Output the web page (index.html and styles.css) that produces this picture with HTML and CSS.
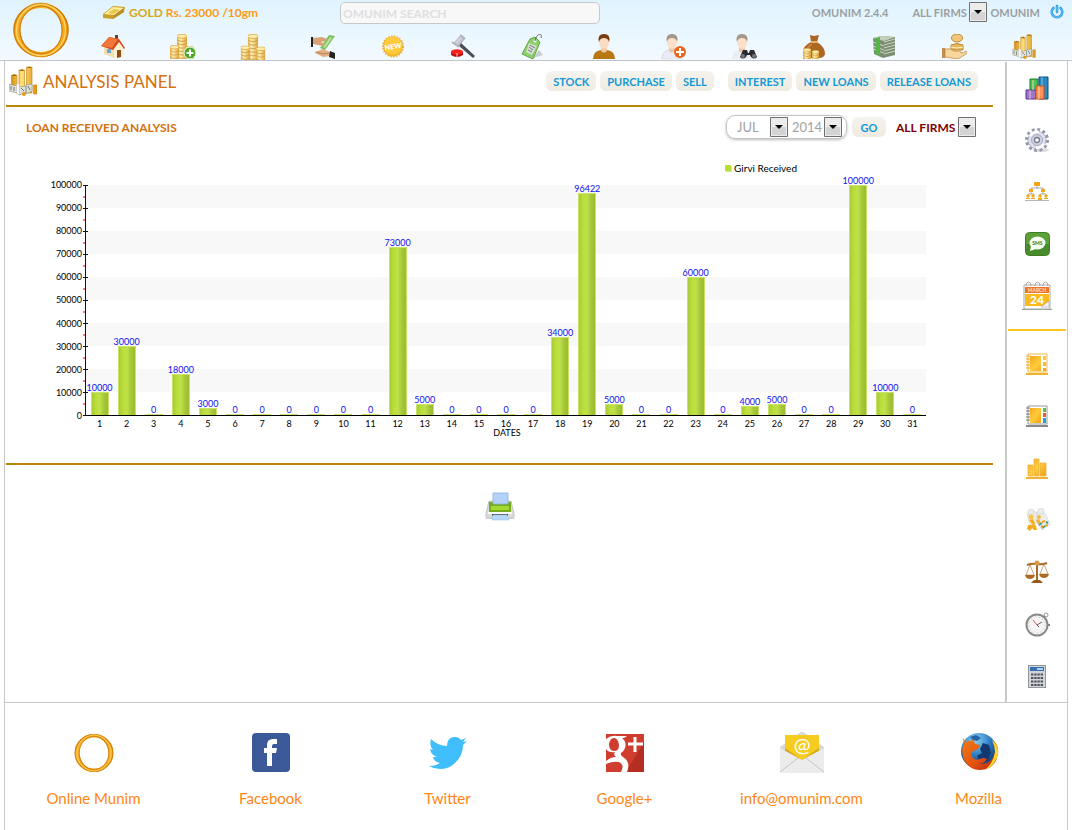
FILE: index.html
```html
<!DOCTYPE html>
<html lang="en">
<head>
<meta charset="utf-8">
<title>Omunim - Analysis Panel</title>
<link rel="stylesheet" href="styles.css">
</head>
<body>
<svg class="defs" width="0" height="0" aria-hidden="true">
  <defs>
    <linearGradient id="gold" x1="0" y1="0" x2="1" y2="1"><stop offset="0" stop-color="#d08008"/><stop offset=".35" stop-color="#ffc62e"/><stop offset=".6" stop-color="#e8920c"/><stop offset="1" stop-color="#ffb325"/></linearGradient>
    <linearGradient id="coin" x1="0" x2="1"><stop offset="0" stop-color="#e6b34a"/><stop offset=".35" stop-color="#fff0b4"/><stop offset="1" stop-color="#dfa23a"/></linearGradient>
    <linearGradient id="pillar" x1="0" x2="1"><stop offset="0" stop-color="#d98f10"/><stop offset=".4" stop-color="#ffe07a"/><stop offset="1" stop-color="#dd930f"/></linearGradient>
    <linearGradient id="silver" x1="0" y1="0" x2="1" y2="1"><stop offset="0" stop-color="#f7f7ff"/><stop offset="1" stop-color="#9a9ab0"/></linearGradient>
    <linearGradient id="yellow" x1="0" y1="0" x2="1" y2="1"><stop offset="0" stop-color="#f5a81a"/><stop offset=".5" stop-color="#ffcb3d"/><stop offset="1" stop-color="#f0a010"/></linearGradient>
    <radialGradient id="globe" cx=".4" cy=".2" r=".8"><stop offset="0" stop-color="#8ed3f3"/><stop offset=".5" stop-color="#2f7fc4"/><stop offset="1" stop-color="#0d2b66"/></radialGradient>
    <linearGradient id="fox" x1="0" y1="0" x2="1" y2="1"><stop offset="0" stop-color="#ef7d16"/><stop offset=".55" stop-color="#e4540f"/><stop offset="1" stop-color="#b81c08"/></linearGradient>
  </defs>
  <symbol id="ring" viewBox="0 0 60 60">
    <ellipse cx="30" cy="30" rx="25" ry="24.500" fill="none" stroke="url(#gold)" stroke-width="5"/>
    <ellipse cx="30" cy="30" rx="22.500" ry="25.500" fill="none" stroke="#e3900e" stroke-width="3.500" transform="rotate(-12 30 30)"/>
    <ellipse cx="30" cy="30" rx="23" ry="25.500" fill="none" stroke="#f7a81f" stroke-width="3.500" transform="rotate(14 30 30)"/>
    <ellipse cx="30" cy="30" rx="27" ry="26" fill="none" stroke="#d17f08" stroke-width="1.500"/>
    <ellipse cx="30" cy="30" rx="24.500" ry="25.500" fill="none" stroke="#ffd569" stroke-width="1.300"/>
    <ellipse cx="30" cy="30" rx="21" ry="24" fill="none" stroke="#c97a0a" stroke-width="1"/>
  </symbol>
  <symbol id="stack" viewBox="0 0 9 24">
    <path d="M0 2v20q4.500 3 9 0V2z" fill="url(#coin)"/><ellipse cx="4.500" cy="2" rx="4.500" ry="1.700" fill="#ffeeb0" stroke="#d39a32" stroke-width=".6"/>
    <path d="M0 5q4.500 3 9 0M0 8q4.500 3 9 0M0 11q4.500 3 9 0M0 14q4.500 3 9 0M0 17q4.500 3 9 0M0 20q4.500 3 9 0" fill="none" stroke="#c9953a" stroke-width=".7"/>
  </symbol>
  <symbol id="coins" viewBox="0 0 24 25">
    <svg x="7" y="0" width="10" height="25" viewBox="0 0 9 22" preserveAspectRatio="none"><use href="#stack" width="9" height="24"/></svg>
    <svg x="0" y="11" width="9" height="14" viewBox="0 0 9 13" preserveAspectRatio="none"><use href="#stack" width="9" height="24"/></svg>
    <svg x="15" y="12" width="9" height="13" viewBox="0 0 9 12" preserveAspectRatio="none"><use href="#stack" width="9" height="24"/></svg>
  </symbol>
  <symbol id="growth" viewBox="0 0 28 30">
    <path d="M2.500 9h5.500v13H2.500zM10 4h5.500v20H10zM17.500 1h5.500v26h-5.500zM24.500 19h3.500v9h-3.500z" fill="url(#pillar)" stroke="#c27f10" stroke-width=".6"/>
    <path d="M2.500 10l3-2 2.500 2zM10 5l3-2 2.500 2zM17.500 2l3-1.500L23 2z" fill="#a86c08"/>
    <path d="M0 18l8 2v7l-8-2zM10 21l7-1v7l-7 2zM17 19l6-1v7l-6 3z" fill="#dfe2da" stroke="#8b9084" stroke-width=".6"/>
    <path d="M2 20v4M5 21v4M12 22l3 3M19 20l2 4" stroke="#6f766a" fill="none"/><path d="M7.500 18h3v10h-3z" fill="#fafafa" stroke="#bbb" stroke-width=".5"/><circle cx="15" cy="28" r="2" fill="#e39b10"/>
  </symbol>
</svg>

<header class="top">
  <a class="logo" href="#" aria-label="Omunim home"><svg width="62" height="60"><use href="#ring"/></svg></a>
  <div class="top-body">
    <div class="top-bar">
      <p class="rate"><svg width="24" height="16" viewBox="0 0 24 16"><path d="M1 10L11 2l12 1-1 5-11 7-10-1z" fill="#c9a227"/><path d="M2 10l9-7 11 1-10 7z" fill="#ffeda0"/><path d="M6 9l6-4 6 1-7 4z" fill="#e7c64c"/><path d="M12 11l10-7v4l-11 7z" fill="#b9902a"/></svg><span class="metal">GOLD</span> Rs. 23000 /10gm</p>
      <input class="search" type="text" placeholder="OMUNIM SEARCH" aria-label="Omunim search">
      <div class="account">
        <span class="version">OMUNIM 2.4.4</span>
        <select class="pick" aria-label="Firm"><option>ALL FIRMS</option></select>
        <span class="user">OMUNIM</span>
        <button class="power" type="button" aria-label="Log out"><svg width="16" height="16" viewBox="0 0 16 16"><path d="M4.500 4a5.300 5.300 0 1 0 7 0M8 2v6" fill="none" stroke="#2b9de6" stroke-width="2.600" stroke-linecap="round"/><path d="M4.500 4a5.300 5.300 0 1 0 7 0M8 2v6" fill="none" stroke="#7fccf7" stroke-width=".8"/></svg></button>
      </div>
    </div>
    <nav class="tools" aria-label="Main">
      <a href="#" aria-label="Home"><svg width="24" height="25" viewBox="0 0 24 25"><path d="M14 1h3v6h-3z" fill="#7a3a1a"/><path d="M3 12l8-5 11 6v8l-9 3-10-4z" fill="#f3dfb4"/><path d="M13 14l5-7 5 7v8l-10 3z" fill="#fff2d0"/><path d="M0 12L8 3l10 2 6 9-1 1-5-7-6 8z" fill="#d9451b"/><path d="M1 12L8 3l9 2-6 9z" fill="#f17738"/><path d="M16 16h4v7l-4 1z" fill="#8a4d20"/><path d="M6 15h4v4H6z" fill="#6ea7d2"/></svg></a>
      <a href="#" aria-label="Add stock"><svg width="27" height="26" viewBox="0 0 27 26"><use href="#coins" width="24" height="25"/><circle cx="20" cy="19" r="6" fill="#4da727" stroke="#e9ffe0"/><path d="M20 15.500v7M16.500 19h7" stroke="#fff" stroke-width="2"/></svg></a>
      <a href="#" aria-label="Stock"><svg width="26" height="26" viewBox="0 0 24 25"><use href="#coins" width="24" height="25"/></svg></a>
      <a href="#" aria-label="Payments"><svg width="26" height="25" viewBox="0 0 26 25"><path d="M10 14L19 1l6 1-10 14z" fill="#7cc05c"/><path d="M13 13l7-10 2 1-7 10z" fill="#b9e29c"/><path d="M1 3h2v10H1z" fill="#222"/><path d="M3 4l9-1 5 2-2 2-4 1 4 2-2 2-5-1-5-1z" fill="#d8a274"/><path d="M5 18l8-3 7 3 1 4-8 1-8-4z" fill="#e3b088"/><path d="M6 18l7 2 6-1" stroke="#a8744e" fill="none" stroke-width=".8"/><path d="M20 17l5 2v6l-6-2z" fill="#222"/></svg></a>
      <a href="#" aria-label="New"><svg width="24" height="25" viewBox="0 0 24 25"><circle cx="12" cy="12.500" r="10" fill="#f9bc26" stroke="#eab03a" stroke-width="2" stroke-dasharray="1.600 1.200"/><circle cx="12" cy="11.500" r="9" fill="#ffca3c"/><text class="badge-text" x="12" y="15" text-anchor="middle" transform="rotate(-8 12 12)">NEW</text></svg></a>
      <a href="#" aria-label="Auction"><svg width="26" height="25" viewBox="0 0 26 25"><path d="M11 9l14 13-2 2L9 12z" fill="#4a4d52"/><path d="M4 9L11 1l4 3-7 9z" fill="url(#silver)" stroke="#999" stroke-width=".7"/><path d="M2 8l7 5M10 1l5 4" stroke="#b5b5b5" stroke-width="2"/><path d="M1 18v3q6 4 12 0v-3z" fill="#c00b0b"/><ellipse cx="7" cy="18" rx="6" ry="2.700" fill="#f62222"/><path d="M7 19v4" stroke="#ffc0c0"/></svg></a>
      <a href="#" aria-label="Price tags"><svg width="24" height="26" viewBox="0 0 24 26"><path d="M12 24l10-3-4-5z" fill="#c6cdd0"/><path d="M9 5l5-2 5 5-7 17L1 20z" fill="#8bcf6a" stroke="#5fa647"/><path d="M8 9l8 3-5 9-6-3z" fill="#d5dfd0"/><path d="M9 11l5 3M8 13l4 3M7 16l4 2" stroke="#777"/><circle cx="14" cy="7" r="1.500" fill="#fff"/><path d="M14 7c2-9 8-8 6-3" fill="none" stroke="#666"/></svg></a>
      <a href="#" aria-label="Customer"><svg width="24" height="25" viewBox="0 0 24 25"><path d="M1 25q0-8 8-9h6q8 1 8 9z" fill="#b97714"/><path d="M9 13h6v4q-3 3-6 0z" fill="#f0c6a4"/><ellipse cx="12" cy="8" rx="5" ry="7" fill="#fbdcc2"/><path d="M7 8Q5 0 12 0t5 8q-1-4-5-4T7 8z" fill="#7c3c12"/></svg></a>
      <a href="#" aria-label="Add customer"><svg width="26" height="25" viewBox="0 0 26 25"><path d="M1 25q0-8 7-9h6q7 1 7 9z" fill="#ebecf5" stroke="#cfd0dc" stroke-width=".7"/><path d="M8 13h6v4q-3 3-6 0z" fill="#eac5a8"/><ellipse cx="11" cy="8" rx="5" ry="7" fill="#fbe0ca"/><path d="M6 8Q4 0 11 0t5 8q-1-4-5-4T6 8z" fill="#a59789"/><circle cx="19" cy="18" r="6" fill="#e9661d"/><path d="M19 14v8M15 18h8" stroke="#fff" stroke-width="2"/></svg></a>
      <a href="#" aria-label="Find customer"><svg width="26" height="25" viewBox="0 0 26 25"><path d="M1 25q0-8 7-9h6q7 1 7 9z" fill="#ebecf5"/><path d="M8 13h6v4q-3 3-6 0z" fill="#eac5a8"/><ellipse cx="11" cy="8" rx="5" ry="7" fill="#fbe0ca"/><path d="M6 8Q4 0 11 0t5 8q-1-4-5-4T6 8z" fill="#a59789"/><path d="M12 16h4l1 3h1l1-3h4l3 7q-3 3-6 0l-1-2h-3l-1 2q-3 3-6 0z" fill="#2b2b2f"/><circle cx="12" cy="22" r="2" fill="#777"/><circle cx="23" cy="22" r="2" fill="#777"/></svg></a>
      <a href="#" aria-label="Money bag"><svg width="24" height="25" viewBox="0 0 24 25"><path d="M8 1l4 1 5-1-2 7q8 5 8 12-1 4-6 4H7q-6-1-6-6 0-6 8-10z" fill="#ad6624"/><path d="M9 7h7v2H9z" fill="#e6b26a"/><path d="M10 10q-5 3-6 9" stroke="#cd8540" fill="none" stroke-width="2"/><svg x="1" y="14" width="8" height="11" viewBox="0 0 9 12" preserveAspectRatio="none"><use href="#stack" width="9" height="24"/></svg><svg x="10" y="16" width="7" height="9" viewBox="0 0 9 10" preserveAspectRatio="none"><use href="#stack" width="9" height="24"/></svg></svg></a>
      <a href="#" aria-label="Cash"><svg width="24" height="25" viewBox="0 0 24 25"><path d="M1 4l9-2 13 1v18l-12 3-9-4z" fill="#7c8e72"/><path d="M1 4l9-2 13 1-11 4z" fill="#c3cfb8"/><path d="M12 8l11-3M12 11l11-3M12 14l11-3M12 17l11-3M12 20l11-3M1 8l11 4M1 12l11 4M1 15l11 4" stroke="#ccd5c2" fill="none"/><path d="M4 4l4-1v19l-4-2z" fill="#55b648"/></svg></a>
      <a href="#" aria-label="Deposits"><svg width="26" height="25" viewBox="0 0 26 25"><ellipse cx="16" cy="4" rx="5.500" ry="4" fill="#f0c878" stroke="#bd8b34"/><path d="M10 11q6-3 12 0v5H10z" fill="#e4b65c" stroke="#bd8b34"/><path d="M10 13q6 2 12 0" stroke="#fff0b0" fill="none"/><path d="M1 14h3v10H1z" fill="#c09058"/><path d="M4 15q6-1 9 2h5q3 1 2 2 3 0 5-2 2 1 0 3l-8 5-13-2z" fill="#f8d79c" stroke="#ba8538" stroke-width=".7"/></svg></a>
      <a href="#" aria-label="Analysis"><svg width="24" height="25" viewBox="0 0 28 30"><use href="#growth" width="28" height="30"/></svg></a>
    </nav>
  </div>
</header>

<div class="frame">
  <div class="content">
    <main class="main">
      <div class="title-row">
        <h1 class="title"><svg width="28" height="30"><use href="#growth"/></svg>ANALYSIS PANEL</h1>
        <div class="tabs">
          <div class="tab-group"><button class="btn" type="button">STOCK</button><button class="btn" type="button">PURCHASE</button><button class="btn" type="button">SELL</button></div>
          <div class="tab-group"><button class="btn" type="button">INTEREST</button><button class="btn" type="button">NEW LOANS</button><button class="btn" type="button">RELEASE LOANS</button></div>
        </div>
      </div>
      <section class="report">
        <div class="report-head">
          <h2 class="subtitle">LOAN RECEIVED ANALYSIS</h2>
          <form class="filters">
            <div class="period">
              <select class="pick month" aria-label="Month"><option>JUL</option></select>
              <select class="pick year" aria-label="Year"><option>2014</option></select>
            </div>
            <button class="btn" type="button">GO</button>
            <select class="pick firm" aria-label="Firm filter"><option>ALL FIRMS</option></select>
          </form>
        </div>
        <figure class="chart">
          <figcaption class="legend"><i class="swatch"></i>Girvi Received</figcaption>
          <div class="plot-row">
            <div class="scale"><span>100000</span><span>90000</span><span>80000</span><span>70000</span><span>60000</span><span>50000</span><span>40000</span><span>30000</span><span>20000</span><span>10000</span><span>0</span></div>
            <div class="axis"></div>
            <ol class="plot">
              <li><div class="col"><b>10000</b><i style="height:10%"></i></div><span>1</span></li>
              <li><div class="col"><b>30000</b><i style="height:30%"></i></div><span>2</span></li>
              <li><div class="col"><b>0</b><i style="height:0%"></i></div><span>3</span></li>
              <li><div class="col"><b>18000</b><i style="height:18%"></i></div><span>4</span></li>
              <li><div class="col"><b>3000</b><i style="height:3%"></i></div><span>5</span></li>
              <li><div class="col"><b>0</b><i style="height:0%"></i></div><span>6</span></li>
              <li><div class="col"><b>0</b><i style="height:0%"></i></div><span>7</span></li>
              <li><div class="col"><b>0</b><i style="height:0%"></i></div><span>8</span></li>
              <li><div class="col"><b>0</b><i style="height:0%"></i></div><span>9</span></li>
              <li><div class="col"><b>0</b><i style="height:0%"></i></div><span>10</span></li>
              <li><div class="col"><b>0</b><i style="height:0%"></i></div><span>11</span></li>
              <li><div class="col"><b>73000</b><i style="height:73%"></i></div><span>12</span></li>
              <li><div class="col"><b>5000</b><i style="height:5%"></i></div><span>13</span></li>
              <li><div class="col"><b>0</b><i style="height:0%"></i></div><span>14</span></li>
              <li><div class="col"><b>0</b><i style="height:0%"></i></div><span>15</span></li>
              <li><div class="col"><b>0</b><i style="height:0%"></i></div><span>16</span></li>
              <li><div class="col"><b>0</b><i style="height:0%"></i></div><span>17</span></li>
              <li><div class="col"><b>34000</b><i style="height:34%"></i></div><span>18</span></li>
              <li><div class="col"><b>96422</b><i style="height:96.422%"></i></div><span>19</span></li>
              <li><div class="col"><b>5000</b><i style="height:5%"></i></div><span>20</span></li>
              <li><div class="col"><b>0</b><i style="height:0%"></i></div><span>21</span></li>
              <li><div class="col"><b>0</b><i style="height:0%"></i></div><span>22</span></li>
              <li><div class="col"><b>60000</b><i style="height:60%"></i></div><span>23</span></li>
              <li><div class="col"><b>0</b><i style="height:0%"></i></div><span>24</span></li>
              <li><div class="col"><b>4000</b><i style="height:4%"></i></div><span>25</span></li>
              <li><div class="col"><b>5000</b><i style="height:5%"></i></div><span>26</span></li>
              <li><div class="col"><b>0</b><i style="height:0%"></i></div><span>27</span></li>
              <li><div class="col"><b>0</b><i style="height:0%"></i></div><span>28</span></li>
              <li><div class="col"><b>100000</b><i style="height:100%"></i></div><span>29</span></li>
              <li><div class="col"><b>10000</b><i style="height:10%"></i></div><span>30</span></li>
              <li><div class="col"><b>0</b><i style="height:0%"></i></div><span>31</span></li>
            </ol>
          </div>
          <p class="axis-name">DATES</p>
        </figure>
      </section>
      <button class="print" type="button" aria-label="Print"><svg width="30" height="29" viewBox="0 0 30 29"><path d="M0 26h30v1H0z" fill="#e2e2e2"/><path d="M4 9h22l3 13v3q0 1-2 1H3q-2 0-2-1v-3z" fill="#dcdedd" stroke="#b3b6b4" stroke-width=".8"/><path d="M4 10h22v10H4z" fill="#76ad1d"/><path d="M6 14h18v4H6z" fill="#a5d932"/><path d="M3 20h24v2H3z" fill="#fafafa"/><path d="M7 22h16v2H7z" fill="#47504e"/><path d="M8 1h15v11H8z" fill="#b4d2f7" stroke="#86b3e6" stroke-width=".8"/><path d="M8 23h14l2 5H7z" fill="#b8d8fa" stroke="#a5c8ea" stroke-width=".6"/></svg></button>
    </main>

    <nav class="side" aria-label="Shortcuts">
      <a href="#" aria-label="Reports"><svg width="24" height="24" viewBox="0 0 24 24"><path d="M5 3h8v12H5z" fill="#49c452" stroke="#16792a"/><path d="M14 1h9v22h-9z" fill="#2c89c0" stroke="#0c4d80"/><path d="M17 1v22" stroke="#7fc3e8"/><path d="M1 14h10v9H1z" fill="#9e77c7" stroke="#58318a"/><path d="M5 14v9" stroke="#dbc7f2"/><path d="M11 10h8v13h-8z" fill="#ff925a" stroke="#d34c10"/><path d="M14 10v13M8 4v10" stroke="#ffd0b0"/></svg></a>
      <a href="#" aria-label="Settings"><svg width="25" height="25" viewBox="0 0 25 25"><ellipse cx="16" cy="22" rx="8" ry="2" fill="#ddd"/><circle cx="12" cy="12" r="10" fill="none" stroke="#9496ac" stroke-width="4" stroke-dasharray="2.700 2.530"/><circle cx="12" cy="12" r="9" fill="#dfe0ee" stroke="#a4a6ba" stroke-width=".8"/><path d="M5 8q3-5 9-4M19 16q-3 4-8 4" stroke="#fff" stroke-width="2.500" fill="none"/><circle cx="12" cy="12" r="5.500" fill="#cfd1df" stroke="#a9abbf"/><circle cx="12" cy="12" r="2.500" fill="#fff" stroke="#777a90" stroke-width="1.300"/></svg></a>
      <a href="#" aria-label="Hierarchy"><svg width="24" height="20" viewBox="0 0 24 20"><path d="M0 18h24v1H0z" fill="#b5b5b5"/><path d="M12 4v3M6 8V6h12v2M6 10v2M3 13v-1h6v1M18 10v2M15 13v-1h6v1" fill="none" stroke="#aaa"/><g fill="#f5a716"><path d="M9 0h6v4H9zM4 7h4v3H4zM16 7h4v3h-4z"/><circle cx="3" cy="14" r="1.700"/><circle cx="8" cy="14" r="1.700"/><circle cx="15" cy="14" r="1.700"/><circle cx="21" cy="14" r="1.700"/><path d="M1 16h4v1H1zM6 16h4v1H6zM13 16h4v2h-4zM19 16h4v1h-4z"/></g></svg></a>
      <a href="#" aria-label="Messages"><svg width="25" height="24" viewBox="0 0 25 24"><rect x=".5" y=".5" width="24" height="23" rx="4" fill="#5da03a" stroke="#3e7d22"/><path d="M1 12h23v8q0 3-3 3H4q-3 0-3-3z" fill="#488b2b"/><ellipse cx="12.500" cy="11" rx="8" ry="6.500" fill="#f6fff0"/><path d="M6 14l-1 5 6-2z" fill="#f6fff0"/><text class="sms-text" x="12.500" y="13" text-anchor="middle">SMS</text></svg></a>
      <a href="#" aria-label="Calendar"><svg width="30" height="30" viewBox="0 0 30 30"><path d="M0 28h30v1H0z" fill="#999"/><path d="M2 4h26v24H2z" fill="#fff" stroke="#aaa"/><path d="M3 6h24v6H3z" fill="#ef7427"/><path d="M3 13h24v12H3z" fill="#fbba1c"/><path d="M19 26l8-6v6z" fill="#f4f4f4" stroke="#aaa" stroke-width=".6"/><path d="M4 5q0-4 2.500-4T9 5M13 5q0-4 2.500-4T18 5M21 5q0-4 2.500-4T26 5" fill="none" stroke="#aaa"/><text class="month-text" x="15" y="11" text-anchor="middle">MARCH</text><text class="day-text" x="15" y="23" text-anchor="middle">24</text></svg></a>
      <hr class="divider">
      <a href="#" aria-label="Ledger"><svg width="24" height="24" viewBox="0 0 24 24"><path d="M1 21h22v2H1z" fill="#f3b22d"/><path d="M3 2h19v18H3z" fill="#fff" stroke="#f3b84a"/><path d="M5 4h11v15H5zM18 4h3v4h-3zM18 10h3v4h-3zM18 16h3v3h-3z" fill="url(#yellow)"/><path d="M1 4h4M1 7h4M1 10h4M1 13h4M1 16h4" stroke="#efa81c"/></svg></a>
      <a href="#" aria-label="Notebook"><svg width="24" height="24" viewBox="0 0 24 24"><path d="M1 21h22v2H1z" fill="#888"/><path d="M3 2h19v18H3z" fill="#fff" stroke="#999"/><path d="M5 4h11v15H5z" fill="url(#yellow)"/><path d="M18 4h3v4h-3z" fill="#68b94b"/><path d="M18 9h3v4h-3z" fill="#f05a28"/><path d="M18 14h3v5h-3z" fill="#26a0da"/><path d="M1 4h4M1 7h4M1 10h4M1 13h4M1 16h4" stroke="#777"/></svg></a>
      <a href="#" aria-label="Charts"><svg width="24" height="24" viewBox="0 0 24 24"><path d="M1 21h22v2H1z" fill="#f3b22d"/><path d="M3 9h5v11H3zM9 3h5v17H9zM15 7h6v13h-6z" fill="url(#yellow)" stroke="#eeb344" stroke-width=".8"/></svg></a>
      <a href="#" aria-label="Partners"><svg width="25" height="24" viewBox="0 0 25 24"><g fill="#ebedec" stroke="#d3d7d5" stroke-width=".7"><path d="M2 6l5-4 5 3 2 9-9 3zM12 4l5-2 4 5 4 9-8 6-6-9z"/><circle cx="6" cy="4" r="3"/><circle cx="16" cy="3" r="3"/></g><circle cx="6" cy="9" r="2.500" fill="#fac548"/><path d="M4 12l4-1 2 4-3 1zM3 17h4l2-2 2 3 1 4h-3l-2-2-2 3-3-2z" fill="#f6ad1b"/><circle cx="14" cy="9" r="2" fill="#f6b93a"/><path d="M11 12l3-1 2 4-3 1z" fill="#f2b233"/><path d="M14 17l3-2M17 20l3-2M21 14l2 1" stroke="#3da388" stroke-width="2"/><path d="M17 14l3-1M20 18l3-1M16 18l2 1" stroke="#eda421" stroke-width="2"/></svg></a>
      <a href="#" aria-label="Balance"><svg width="24" height="24" viewBox="0 0 24 24"><path d="M12 2v18M2 5q5-2 10-1t10-1" stroke="#a66b24" stroke-width="2" fill="none"/><path d="M5 5L1 15h8L5 5M19 4l-4 10h8L19 4" fill="none" stroke="#b9935e" stroke-width=".8"/><path d="M0 15h10q-1 4-5 4t-5-4zM14 14h10q-1 4-5 4t-5-4z" fill="#ae6b22"/><path d="M9 20h6l3 3H6z" fill="#9b5a15"/><circle cx="12" cy="3" r="2.500" fill="#d89a42"/></svg></a>
      <a href="#" aria-label="Stopwatch"><svg width="25" height="25" viewBox="0 0 25 25"><circle cx="21" cy="3" r="2" fill="none" stroke="#999"/><path d="M17 7l3-3M22 13h3" stroke="#888" stroke-width="2"/><circle cx="12" cy="13" r="10.500" fill="#f4f4f4" stroke="#8a8a8a" stroke-width="2"/><circle cx="12" cy="13" r="8" fill="none" stroke="#bbb" stroke-dasharray="1 2.900"/><path d="M12 13l5-3M12 13l2 2" stroke="#666"/><path d="M12 13L8 8" stroke="#e55"/></svg></a>
      <a href="#" aria-label="Calculator"><svg width="18" height="23" viewBox="0 0 18 23"><rect x=".5" y=".5" width="17" height="22" fill="#d2d4d8" stroke="#94979c"/><path d="M2 2h14v4H2z" fill="#396fae"/><path d="M9 3h6v2H9z" fill="#a8d0f1"/><path d="M3 9.500h12M3 13h12M3 16.500h12M3 20h12" stroke="#50545c" stroke-width="2" stroke-dasharray="2.400 .8"/></svg></a>
    </nav>
  </div>

  <footer class="links">
    <a href="#"><svg width="44" height="42" viewBox="0 0 60 60"><use href="#ring"/></svg>Online Munim</a>
    <a href="#"><svg width="42" height="42" viewBox="0 0 42 42"><rect x="2" y="1" width="38" height="39" rx="4" fill="#3b5998"/><path d="M17 34V21h-3v-5h3v-3q0-6 6-6h4v5h-3q-2 0-2 2v2h5l-1 5h-4v13z" fill="#fff"/></svg>Facebook</a>
    <a href="#"><svg width="42" height="42" viewBox="0 0 42 42"><path d="M4 7q7 7 16 7Q20 5 28 5q4 0 6 3l5-2-3 4 4-1-4 4q0 11-8 18-6 6-15 6-6 0-11-3 7 0 11-3-6-1-7-6h4q-6-2-7-8l3 1Q2 14 4 7z" fill="#40bdfb"/></svg>Twitter</a>
    <a href="#"><svg width="42" height="42" viewBox="0 0 42 42"><path d="M2 2h38v38H2z" fill="#cf3d2e"/><path d="M40 10v30H22z" fill="#b42e22"/><path d="M2 7q5-4 11-3h10l-3 2h-2q5 4 3 10-1 3-4 5-1 2 2 4 8 5 4 15h-6q4-7-2-10-6-1-13 2v-3q5-4 10-4-3-2-1-5-6 1-9-3zM5 12q0 7 5 7t5-6q-1-7-5-7t-5 6z" fill="#fff" fill-rule="evenodd"/><path d="M31 5v15M24 12h15" stroke="#fff" stroke-width="3"/></svg>Google+</a>
    <a href="#"><svg width="46" height="42" viewBox="0 0 46 42"><path d="M1 15L23-1l22 16v26H1z" fill="#d8d8d8"/><path d="M6 3h34v20L23 31 6 23z" fill="#f6cc21"/><path d="M6 16l17 12 17-12v7l-17 8-17-8z" fill="#d4a915"/><path d="M1 16l22 12 22-12v25H1z" fill="#ececec"/><path d="M1 40l18-14M45 40L27 26" stroke="#c3c3c3"/><text class="at-text" x="23" y="20" text-anchor="middle">@</text></svg>info@omunim.com</a>
    <a href="#"><svg width="42" height="42" viewBox="0 0 42 42"><circle cx="21" cy="19" r="18" fill="url(#globe)"/><path d="M25 11l6 2 2 8-4 8-8-1-2-4 5-3-2-4z" fill="#12386f"/><path d="M12 5l6-2 5 3-4 3-4-1z" fill="#2264a8"/><path d="M5 6q0 4 2 5 4-4 7-1l-1-4q3 2 4 6l5 1-2 4-5 2q-3 3-1 6 3 4 8 2 4-2 7 0-3 5-9 5 14 1 17-12 1-5-1-11 5 5 4 13-2 12-12 15-15 4-22-9-4-11 1-19z" fill="url(#fox)"/><path d="M34 8q7 6 6 14-2 11-13 16 9-8 10-18 0-6-3-12z" fill="#ffd42b"/></svg>Mozilla</a>
  </footer>
</div>
</body>
</html>
```
FILE: styles.css
```css
* {
  box-sizing: border-box;
}

body {
  margin: 0;
  min-height: 100vh;
  display: flex;
  flex-direction: column;
  background: #fff;
  font-family: Lato, "Open Sans", sans-serif;
}

h1, h2, p, figure, ol {
  margin: 0;
  padding: 0;
}

a {
  text-decoration: none;
}

button, input, select {
  font-family: inherit;
}

svg {
  display: block;
  flex: none;
}

.defs {
  position: absolute;
}

/* Header */
.top {
  display: flex;
  height: 61px;
  border-bottom: 1px solid #c2c4cc;
  background: linear-gradient(#dff3fe, #f3faff);
}

.logo {
  width: 78px;
  padding-left: 10px;
}

.top-body {
  flex: 1;
  padding-right: 13px;
}

.top-bar {
  display: flex;
  height: 34px;
  padding: 2px 0 0 24px;
  margin-right: -6px;
}

.rate {
  display: flex;
  gap: 3px;
  width: 238px;
  height: 20px;
  align-items: center;
  color: #ff9a14;
  font-size: 12px;
  font-weight: 700;
}

.metal {
  color: #d9a520;
}

.search {
  width: 260px;
  height: 22px;
  padding: 0 2px;
  border: 1px solid #c6c9cc;
  border-radius: 5px;
  background: #f8f8f8;
  font-size: 12px;
  font-weight: 700;
}

.search::placeholder {
  color: #dedfe2;
}

.account {
  display: flex;
  height: 20px;
  align-items: center;
  margin-left: auto;
  color: #9c9fa2;
  font-size: 11px;
  font-weight: 700;
}

.version {
  margin-right: 22px;
}

.user {
  margin: 0 9px 0 3px;
}

.power {
  padding: 0;
  border: 0;
  background: none;
}

.tools {
  display: grid;
  grid-template-columns: repeat(14, 1fr);
  justify-items: center;
}

.badge-text {
  fill: #fff;
  font-size: 7px;
  font-weight: 900;
}

/* Controls */
.pick {
  appearance: none;
  height: 20px;
  padding: 0 20px 0 2px;
  border: 0;
  background: url("data:image/svg+xml,%3Csvg xmlns='http://www.w3.org/2000/svg' width='18' height='20'%3E%3Cpath d='M.5.5h17v19H.5z' fill='%23ececec' stroke='%23707070'/%3E%3Cpath d='M2 10h14v8H2z' fill='%23d4d4d4'/%3E%3Cpath d='M5 8h8l-4 4z' fill='%23000'/%3E%3C/svg%3E") no-repeat right center;
  color: inherit;
  font-size: 11px;
  font-weight: 700;
}

.btn {
  min-width: 34px;
  height: 20px;
  padding: 0 7px;
  border: 0;
  border-radius: 6px;
  background: linear-gradient(#f5f3ee, #efebe1);
  color: #1499d6;
  font-size: 11px;
  font-weight: 700;
}

/* Page frame */
.frame {
  flex: 1;
  display: flex;
  flex-direction: column;
  margin: 0 4px;
  border: solid #c8c8c8;
  border-width: 0 1px;
}

.content {
  display: flex;
  padding-top: 1px;
  border-bottom: 1px solid #c8c8c8;
}

.main {
  flex: 1;
  padding: 0 12px 0 1px;
}

.title-row {
  display: flex;
  align-items: center;
  justify-content: space-between;
  height: 45px;
  padding: 0 15px 5px 3px;
  border-bottom: 2px solid #b8860b;
}

.title {
  display: flex;
  align-items: center;
  gap: 6px;
  color: #d5700c;
  font-size: 17px;
  font-weight: 400;
}

.tabs {
  display: flex;
  gap: 14px;
}

.tab-group {
  display: flex;
  gap: 4px;
}

.report {
  padding-bottom: 25px;
  border-bottom: 2px solid #b8860b;
}

.report-head {
  display: flex;
  align-items: center;
  justify-content: space-between;
  height: 40px;
  padding: 0 17px 0 20px;
}

.subtitle {
  color: #d5700c;
  font-size: 12px;
  font-weight: 700;
}

.filters {
  display: flex;
  align-items: center;
}

.period {
  display: flex;
  gap: 2px;
  height: 24px;
  align-items: center;
  margin-right: 5px;
  padding: 0 4px 0 8px;
  border: 1px solid #c4c4c4;
  border-radius: 9px;
  box-shadow: 0 1px 3px #bbb;
  color: #a2a2a2;
}

.period .pick {
  font-size: 13px;
  font-weight: 400;
}

.month {
  width: 53px;
}

.year {
  width: 52px;
  padding-right: 18px;
}

.firm {
  margin-left: 8px;
  color: #800000;
  font-size: 12px;
}

/* Chart */
.chart {
  padding: 14px 67px 0 40px;
  font-size: 9px;
  line-height: 10px;
  color: #000;
}

.legend {
  display: flex;
  gap: 3px;
  align-items: center;
  justify-content: flex-end;
  height: 14px;
  margin: 0 129px 10px 0;
  font-size: 10px;
}

.swatch {
  width: 6px;
  height: 6px;
  background: #b9dd32;
  box-shadow: 1px 1px #d5e6a0;
}

.plot-row {
  display: flex;
  height: 240px;
}

.scale {
  display: flex;
  flex-direction: column;
  justify-content: space-between;
  width: 37px;
  height: 241px;
  margin-top: -5px;
  padding-right: 1px;
  text-align: right;
}

.axis {
  z-index: 1;
  width: 5px;
  height: 231px;
  background-image:
    linear-gradient(90deg, transparent 2px, #111 2px, #111 3px, transparent 3px),
    repeating-linear-gradient(#111 0, #111 1px, transparent 1px, transparent 23px),
    repeating-linear-gradient(transparent 0, transparent 11px, #f77 11px, #f77 13px, transparent 13px, transparent 23px);
  background-size: auto, auto, 2px 100%;
  background-repeat: no-repeat;
}

.plot {
  flex: 1;
  display: grid;
  grid-template-columns: repeat(31, 1fr);
  margin-left: -2px;
  list-style: none;
  background: repeating-linear-gradient(#f8f8f8 0, #f8f8f8 23px, #fff 23px, #fff 46px) no-repeat 0 0 / 100% 230px;
}

.plot li {
  min-width: 0;
  text-align: center;
}

.col {
  display: flex;
  flex-direction: column;
  align-items: center;
  justify-content: flex-end;
  height: 231px;
  border-bottom: 1px solid #000;
}

.col b {
  flex: none;
  margin-bottom: -1px;
  color: #1010ee;
  font-weight: 400;
}

.col i {
  flex: none;
  width: 18px;
  min-height: 1px;
  border: solid #c9e368;
  border-width: 1px 1px 0;
  background: linear-gradient(90deg, #a9ca3a, #badf38 25%, #bfe04c 50%, #a6c838 75%, #9bbd2c);
}

.plot span {
  display: block;
  padding-top: 3px;
}

.axis-name {
  margin: 3px 0 0 42px;
  text-align: center;
}

.print {
  display: block;
  margin: 27px auto 0;
  padding: 0;
  border: 0;
  background: none;
}

/* Sidebar */
.side {
  width: 62px;
  padding: 0 1px;
  border-left: 2px solid #c8c8c8;
}

.side a {
  display: flex;
  align-items: center;
  justify-content: center;
  height: 52px;
}

.divider {
  height: 2px;
  margin: 7px 0;
  border: 0;
  background: #fbc71c;
}

.sms-text {
  fill: #3e8524;
  font-size: 5px;
  font-weight: 900;
}

.month-text {
  fill: #ffe0c8;
  font-size: 5px;
  font-weight: 700;
}

.day-text {
  fill: #fff;
  font-size: 12px;
  font-weight: 900;
}

/* Footer links */
.links {
  flex: 1;
  display: grid;
  grid-template-columns: repeat(6, 1fr);
  padding-top: 29px;
}

.links a {
  display: flex;
  flex-direction: column;
  align-items: center;
  gap: 14px;
  color: #ff8614;
  font-size: 15px;
  line-height: 20px;
}

.at-text {
  fill: #fff;
  font-size: 20px;
}
```
